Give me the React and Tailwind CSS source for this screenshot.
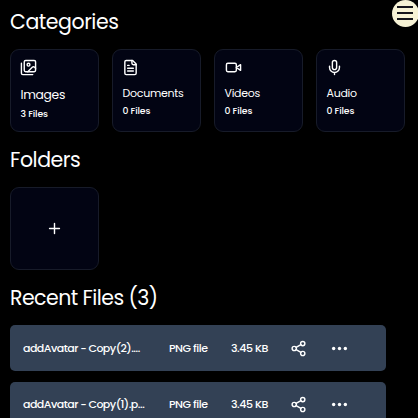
const stroke = {
  viewBox: "0 0 24 24",
  fill: "none",
  stroke: "currentColor",
  strokeWidth: 2,
  strokeLinecap: "round",
  strokeLinejoin: "round",
};

const ImagesIcon = () => (
  <svg {...stroke} className="-ml-[0.5px] size-[17px] shrink-0">
    <path d="M18 22H4a2 2 0 0 1-2-2V6" />
    <path d="m22 13-1.296-1.296a2.41 2.41 0 0 0-3.408 0L11 18" />
    <circle cx="12" cy="8" r="2" />
    <rect width="16" height="16" x="6" y="2" rx="2" />
  </svg>
);

const DocumentIcon = () => (
  <svg {...stroke} className="-ml-[0.5px] size-[17px] shrink-0">
    <path d="M15 2H6a2 2 0 0 0-2 2v16a2 2 0 0 0 2 2h12a2 2 0 0 0 2-2V7Z" />
    <path d="M14 2v4a2 2 0 0 0 2 2h4" />
    <path d="M10 9H8M16 13H8M16 17H8" />
  </svg>
);

const VideoIcon = () => (
  <svg {...stroke} className="size-[17px] shrink-0">
    <path d="m22 8-6 4 6 4V8Z" />
    <rect width="14" height="12" x="2" y="6" rx="2" />
  </svg>
);

const MicIcon = () => (
  <svg {...stroke} className="-ml-[0.5px] size-[17px] shrink-0">
    <path d="M12 2a3 3 0 0 0-3 3v7a3 3 0 0 0 6 0V5a3 3 0 0 0-3-3Z" />
    <path d="M19 10v2a7 7 0 0 1-14 0v-2M12 19v3" />
  </svg>
);

const ShareIcon = () => (
  <svg {...stroke} className="-ml-[1px] size-[17px]">
    <circle cx="18" cy="5" r="3" />
    <circle cx="6" cy="12" r="3" />
    <circle cx="18" cy="19" r="3" />
    <path d="m8.59 13.51 6.83 3.98M15.41 6.51l-6.82 3.98" />
  </svg>
);

const DotsIcon = () => (
  <svg viewBox="0 0 16 16" fill="currentColor" className="-ml-[1px] size-[17px]">
    <circle cx="2.5" cy="8" r="1.6" />
    <circle cx="8" cy="8" r="1.6" />
    <circle cx="13.5" cy="8" r="1.6" />
  </svg>
);

const smallTitle = "text-[11px] leading-4 mt-[9px]";

const categories = [
  { name: "Images", count: "3 Files", Icon: ImagesIcon, title: "text-[12.3px] leading-5 mt-[9px]", sub: "mt-[2px]" },
  { name: "Documents", count: "0 Files", Icon: DocumentIcon, title: smallTitle, sub: "mt-[3px]" },
  { name: "Videos", count: "0 Files", Icon: VideoIcon, title: smallTitle, sub: "mt-[3px]" },
  { name: "Audio", count: "0 Files", Icon: MicIcon, title: smallTitle, sub: "mt-[3px]" },
];

const files = ["addAvatar - Copy(2).…", "addAvatar - Copy(1).p…"];

const card = "h-[83px] w-[89px] rounded-[9px] border border-[#171b29] bg-[#020413]";
const heading = "text-[20.5px] leading-[28px] whitespace-nowrap";

export default function App() {
  return (
    <main className="relative h-[418px] w-[418px] overflow-hidden bg-black pl-[10px] pt-[7.5px] font-['Poppins','Inter',sans-serif] text-white">
      <button aria-label="Menu" className="absolute -top-[0.5px] left-[391.5px] flex size-[27px] flex-col items-center justify-center gap-[4px] rounded-full bg-[#f6f2d5]">
        <span className="h-[2px] w-4 bg-[#15151c]" />
        <span className="h-[2px] w-4 bg-[#15151c]" />
        <span className="h-[2px] w-4 bg-[#15151c]" />
      </button>

      <h1 className={`${heading} tracking-[-0.45px]`}>Categories</h1>
      <section className="mt-[13.5px] flex gap-[13px]">
        {categories.map(({ name, count, Icon, title, sub }) => (
          <article key={name} className={`${card} flex flex-col pl-[9.5px] pt-[9px]`}>
            <Icon />
            <div className={`${title} tracking-[-0.025em]`}>{name}</div>
            <div className={`${sub} text-[9.3px] font-medium leading-[14px] tracking-[-0.15px]`}>{count}</div>
          </article>
        ))}
      </section>

      <h1 className={`${heading} mt-[13.5px] tracking-[-0.45px]`}>Folders</h1>
      <section className={`${card} mt-[13.5px] flex items-center justify-center`}>
        <svg {...stroke} className="size-[17px]">
          <path d="M5 12h14M12 5v14" />
        </svg>
      </section>

      <h1 className={`${heading} mt-[13.5px] tracking-[-0.55px]`}>Recent Files (3)</h1>
      <section className="mt-[13.5px] flex flex-col gap-[10.5px]">
        {files.map((name) => (
          <div key={name} className="flex h-[46px] w-[376px] shrink-0 items-center rounded-[5px] bg-[#334155] pl-[13px] text-[11px] font-medium tracking-[-0.45px]">
            <span className="w-[146px] whitespace-nowrap tracking-[-0.53px]">{name}</span>
            <span className="w-[62px] whitespace-nowrap">PNG file</span>
            <span className="w-[60px] whitespace-nowrap">3.45 KB</span>
            <span className="w-[41px]"><ShareIcon /></span>
            <DotsIcon />
          </div>
        ))}
      </section>
    </main>
  );
}
